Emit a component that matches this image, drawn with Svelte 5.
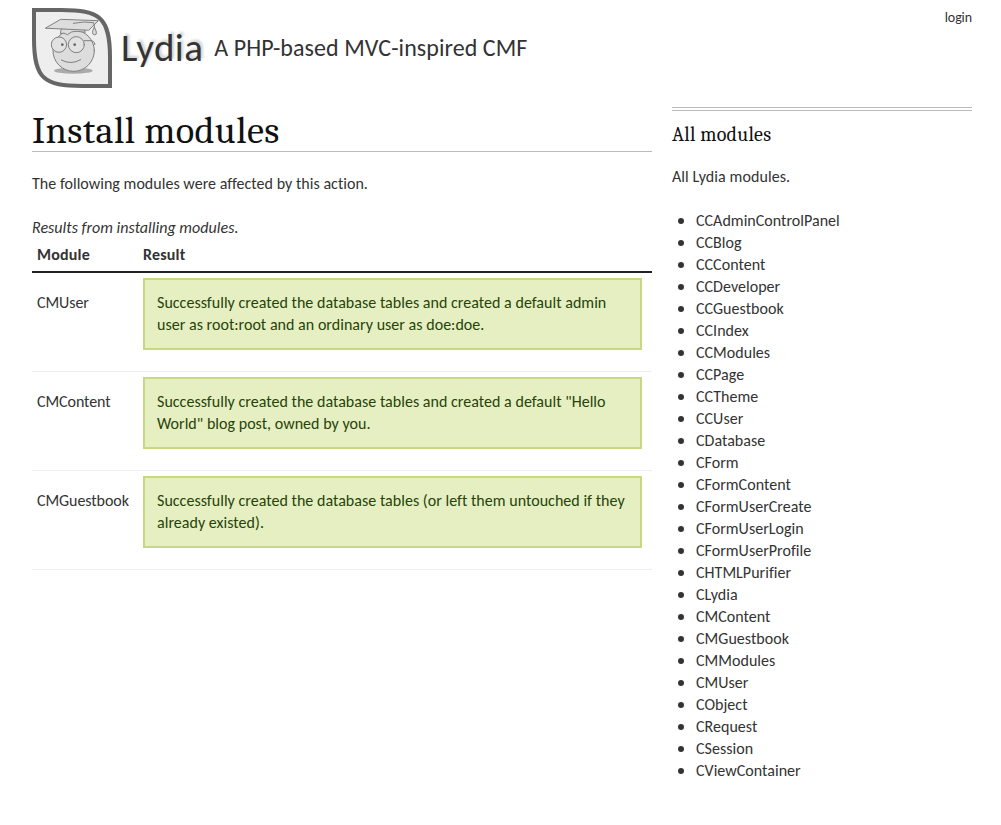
<script>
  const results = [
    { module: 'CMUser', text: 'Successfully created the database tables and created a default admin user as root:root and an ordinary user as doe:doe.' },
    { module: 'CMContent', text: 'Successfully created the database tables and created a default "Hello World" blog post, owned by you.' },
    { module: 'CMGuestbook', text: 'Successfully created the database tables (or left them untouched if they already existed).' }
  ];
  const modules = [
    'CCAdminControlPanel', 'CCBlog', 'CCContent', 'CCDeveloper', 'CCGuestbook', 'CCIndex', 'CCModules',
    'CCPage', 'CCTheme', 'CCUser', 'CDatabase', 'CForm', 'CFormContent', 'CFormUserCreate',
    'CFormUserLogin', 'CFormUserProfile', 'CHTMLPurifier', 'CLydia', 'CMContent', 'CMGuestbook',
    'CMModules', 'CMUser', 'CObject', 'CRequest', 'CSession', 'CViewContainer'
  ];
</script>

<div class="page">
  <header>
    <svg class="logo" viewBox="24 24 240 240">
      <path d="M30 30H112C226 30 258 50 258 172V258H174C62 258 30 238 30 116Z" fill="#eee" stroke="#666" stroke-width="12" />
      <ellipse cx="148" cy="212" rx="58" ry="9" fill="#aaa" />
      <g stroke="#808080" stroke-width="3" stroke-linejoin="round" stroke-linecap="round" fill="#ddd">
        <circle cx="149" cy="152" r="62" />
        <path d="M112 86L109 101Q120 96 130 104Q142 92 160 94L184 97L180 88Z" />
        <path d="M65 84L110 58L223 62L195 90Z" />
        <path d="M148 70Q180 63 209 68L212 84" fill="none" />
        <path d="M211 82Q203 96 207 102Q212 107 217 102Q219 95 211 82Z" />
        <path d="M181 122L204 122Q214 126 213 134" fill="none" />
        <circle cx="105" cy="134" r="23" fill="#e2e2e2" />
        <circle cx="157" cy="134" r="24" fill="#e2e2e2" />
        <path d="M112 180Q141 196 170 179" fill="none" />
      </g>
      <circle cx="115" cy="134" r="4" fill="#666" />
      <circle cx="152" cy="134" r="4" fill="#666" />
    </svg>
    <span class="title">Lydia</span>
    <span class="slogan">A PHP-based MVC-inspired CMF</span>
    <nav>login</nav>
  </header>

  <div class="columns">
    <main>
      <h1>Install modules</h1>
      <p>The following modules were affected by this action.</p>
      <table>
        <caption>Results from installing modules.</caption>
        <thead>
          <tr><th>Module</th><th>Result</th></tr>
        </thead>
        <tbody>
          {#each results as r}
            <tr><td class="name">{r.module}</td><td><div class="success">{r.text}</div></td></tr>
          {/each}
        </tbody>
      </table>
    </main>
    <aside>
      <h4>All modules</h4>
      <p>All Lydia modules.</p>
      <ul>
        {#each modules as m}
          <li>{m}</li>
        {/each}
      </ul>
    </aside>
  </div>
</div>

<style>
  :global(body) { background: #fff; }
  .page {
    width: 940px;
    margin-left: 32px;
    font: 16px/22px Calibri, Carlito, Lato, sans-serif;
    font-variant-ligatures: none;
    letter-spacing: 0.03px;
    color: #333;
  }
  header { display: flex; height: 107px; padding-top: 8px; box-sizing: border-box; }
  .logo { width: 80px; height: 80px; display: block; }
  .title { font-size: 39px; line-height: 80px; margin-left: 9px; letter-spacing: 0.4px; text-shadow: 2px -2px 3px #ccc; }
  .slogan { font-size: 24px; line-height: 80px; margin-left: 11px; letter-spacing: 0.07px; }
  nav { margin-left: auto; font-size: 14px; line-height: 20px; letter-spacing: -0.1px; }
  .columns { display: flex; gap: 20px; }
  main { width: 620px; }
  aside { width: 300px; border-top: 4px double #bbb; }
  h1, h4 { font-family: Cambria, Caladea, "Liberation Serif", serif; font-weight: normal; color: #111; margin: 0; }
  h1 { font-size: 38.4px; line-height: 48px; height: 44px; border-bottom: 1px solid #bbb; letter-spacing: 0.35px; }
  h4 { font-size: 20px; line-height: 22px; margin-top: 13px; letter-spacing: 0.25px; }
  p { margin: 0; }
  main p { margin: 21px 0 22px; }
  aside p { margin: 20px 0 22px; letter-spacing: 0.08px; }
  table { width: 620px; border-collapse: separate; border-spacing: 0; table-layout: fixed; }
  caption { text-align: left; font-style: italic; height: 22px; }
  th { text-align: left; height: 22px; padding: 5px; border-bottom: 2px solid #222; box-sizing: content-box; letter-spacing: 0.2px; }
  th:first-child { width: 96px; }
  td { padding: 5px 10px 5px 5px; border-bottom: 1px solid #eee; vertical-align: top; }
  td.name { padding: 19px 5px 0; letter-spacing: -0.07px; }
  .success { margin-bottom: 16px; padding: 12px; border: 2px solid #c6d880; background: #e6efc2; color: #264409; height: 44px; }
  ul { margin: 0; padding: 0 0 0 24px; }
  li { list-style: none; display: flex; align-items: center; height: 22px; }
  li::before { content: ""; width: 6px; height: 6px; border-radius: 50%; background: #333; margin: 0 12px 0 -18px; }
</style>
